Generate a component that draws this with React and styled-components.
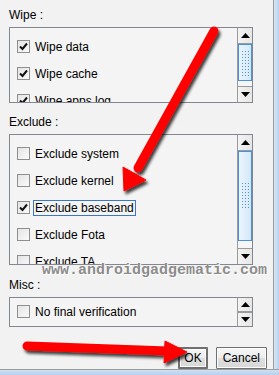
import React from "react";
import styled, { createGlobalStyle } from "styled-components";

const GlobalStyle = createGlobalStyle`
  html, body {
    margin: 0;
    padding: 0;
    background: #f0f0f0;
  }
  body {
    font-family: "Liberation Sans", Arial, sans-serif;
    font-size: 12px;
    color: #000;
  }
`;

const Page = styled.div`
  position: relative;
  width: 279px;
  height: 375px;
  display: flex;
  flex-direction: column;
  overflow: hidden;
`;

const MainRow = styled.div`
  flex: 1;
  display: flex;
`;

const Dialog = styled.div`
  flex: 1;
  display: flex;
  flex-direction: column;
  padding: 8px 20px 0 9px;
  background: #f2f2f2;
  border-right: 1px solid #9c9c9c;
`;

const SideEdge = styled.div`
  width: 5px;
  background: linear-gradient(to right, #d6e6f5, #b9d3ee);
`;

const BottomEdge = styled.div`
  height: 6px;
  border-top: 1px solid #9c9c9c;
  background: linear-gradient(to bottom, #cfe0f2, #b6d0ec);
`;

const Label = styled.div`
  height: 14px;
  line-height: 14px;
  margin: ${({ $top }) => $top || 0}px 0 5px;
`;

const ListBox = styled.div`
  display: flex;
  height: ${({ $h }) => $h}px;
  border: 1px solid #828790;
  background: #f4f4f4;
`;

const Items = styled.div`
  flex: 1;
  overflow: hidden;
  padding: ${({ $pad }) => $pad ?? 12}px 0 0 7px;
`;

const Row = styled.div`
  display: flex;
  align-items: center;
  height: 13px;
  margin-bottom: 14px;
  white-space: nowrap;
`;

const Box = styled.span`
  width: 11px;
  height: 11px;
  border: 1px solid #8e8f8f;
  background: linear-gradient(135deg, #e4e4e4, #fafafa);
  display: flex;
  align-items: center;
  justify-content: center;
  margin-right: 4px;
  flex-shrink: 0;
`;

const ItemText = styled.span`
  padding: 0 1px;
  line-height: 14px;
  border: 1px solid ${({ $focus }) => ($focus ? "#3a77c6" : "transparent")};
  margin-left: -1px;
`;

const ScrollBar = styled.div`
  width: 14px;
  display: flex;
  flex-direction: column;
  border-left: 1px solid #9a9a9a;
  background: #ececec;
`;

const ArrowBtn = styled.div`
  height: ${({ $h }) => $h || 15}px;
  display: flex;
  align-items: center;
  justify-content: center;
  background: linear-gradient(to right, #f3f3f3, #e6e6e6);
  border-top: ${({ $down }) => ($down ? "1px solid #9a9a9a" : "none")};
  border-bottom: ${({ $down }) => ($down ? "none" : "1px solid #9a9a9a")};
`;

const Thumb = styled.div`
  height: ${({ $h }) => $h}px;
  border: 1px solid #4d90dd;
  background: linear-gradient(to right, #eaf4fd, #d5e8fa);
  display: flex;
  align-items: center;
  justify-content: center;
`;

const Grip = styled.div`
  width: 8px;
  height: ${({ $h }) => $h}px;
  background-image: radial-gradient(#4f93e0 0.8px, transparent 1px);
  background-size: 3px 3px;
`;

const Track = styled.div`
  flex: 1;
  background: #f6f6f6;
`;

const Buttons = styled.div`
  display: flex;
  justify-content: flex-end;
  gap: 8px;
  margin: 20px -14px 0 0;
`;

const Button = styled.button`
  height: 22px;
  padding: 0 ${({ $pad }) => $pad}px;
  font-family: "Liberation Sans", Arial, sans-serif;
  font-size: 12px;
  color: #000;
  background: linear-gradient(to bottom, #f6f6f6 0%, #ececec 50%, #dedede 51%, #d8d8d8 100%);
  border: ${({ $default }) => ($default ? "2px solid #707070" : "1px solid #707070")};
  border-radius: 1px;
  box-shadow: inset 0 0 0 1px #fcfcfc;
`;

const Watermark = styled.div`
  position: absolute;
  left: 42px;
  top: 262px;
  font-family: "Liberation Mono", "Courier New", monospace;
  font-size: 15px;
  font-weight: bold;
  color: #8c8c8c;
  text-shadow: 0 0 1px #fff, 1px 1px 0 #fff;
  white-space: nowrap;
`;

const Overlay = styled.svg`
  position: absolute;
  left: 0;
  top: 0;
  pointer-events: none;
`;

const Check = () => (
  <svg width="9" height="9" viewBox="0 0 9 9">
    <path d="M1 4.5 L3.5 7 L8 1.5" fill="none" stroke="#111" strokeWidth="2" />
  </svg>
);

const Tri = ({ down }) => (
  <svg width="9" height="5" viewBox="0 0 9 5">
    <path d={down ? "M0 0 H9 L4.5 5 Z" : "M0 5 H9 L4.5 0 Z"} fill="#000" />
  </svg>
);

const Item = ({ checked, focus, children }) => (
  <Row>
    <Box>{checked && <Check />}</Box>
    <ItemText $focus={focus}>{children}</ItemText>
  </Row>
);

const wipe = ["Wipe data", "Wipe cache", "Wipe apps log"];
const exclude = ["Exclude system", "Exclude kernel", "Exclude baseband", "Exclude Fota", "Exclude TA"];

const App = () => {
  return (
    <Page>
      <GlobalStyle />
      <MainRow>
        <Dialog>
          <Label>Wipe :</Label>
          <ListBox $h={74}>
            <Items>
              {wipe.map((w) => (
                <Item key={w} checked>{w}</Item>
              ))}
            </Items>
            <ScrollBar>
              <ArrowBtn><Tri /></ArrowBtn>
              <Thumb $h={35}><Grip $h={26} /></Thumb>
              <Track />
              <ArrowBtn $down><Tri down /></ArrowBtn>
            </ScrollBar>
          </ListBox>

          <Label $top={12}>Exclude :</Label>
          <ListBox $h={129}>
            <Items>
              {exclude.map((e) => (
                <Item key={e} checked={e === "Exclude baseband"} focus={e === "Exclude baseband"}>
                  {e}
                </Item>
              ))}
            </Items>
            <ScrollBar>
              <ArrowBtn><Tri /></ArrowBtn>
              <Thumb $h={88}><Grip $h={28} /></Thumb>
              <Track />
              <ArrowBtn $down><Tri down /></ArrowBtn>
            </ScrollBar>
          </ListBox>

          <Label $top={13}>Misc :</Label>
          <ListBox $h={28}>
            <Items $pad={7}>
              <Item>No final verification</Item>
            </Items>
            <ScrollBar>
              <ArrowBtn $h={13}><Tri /></ArrowBtn>
              <ArrowBtn $h={13} $down><Tri down /></ArrowBtn>
            </ScrollBar>
          </ListBox>

          <Buttons>
            <Button $default $pad={4}>OK</Button>
            <Button $pad={6}>Cancel</Button>
          </Buttons>
        </Dialog>
        <SideEdge />
      </MainRow>
      <BottomEdge />

      <Watermark>www.androidgadgematic.com</Watermark>

      <Overlay width="279" height="375" viewBox="0 0 279 375">
        <defs>
          <filter id="shadow" x="-20%" y="-20%" width="140%" height="140%">
            <feDropShadow dx="2" dy="3" stdDeviation="1.8" floodColor="#000" floodOpacity="0.75" />
          </filter>
        </defs>
        <g filter="url(#shadow)" fill="#ff0000" stroke="#ff0000">
          <line x1="214" y1="31" x2="138" y2="168" strokeWidth="9" strokeLinecap="round" />
          <polygon points="124,191 123,167 146,180" strokeWidth="1" strokeLinejoin="round" />
          <line x1="27" y1="346" x2="168" y2="351" strokeWidth="9" strokeLinecap="round" />
          <polygon points="187,352 165,341 164,363" strokeWidth="1" strokeLinejoin="round" />
        </g>
      </Overlay>
    </Page>
  );
};

export default App;
